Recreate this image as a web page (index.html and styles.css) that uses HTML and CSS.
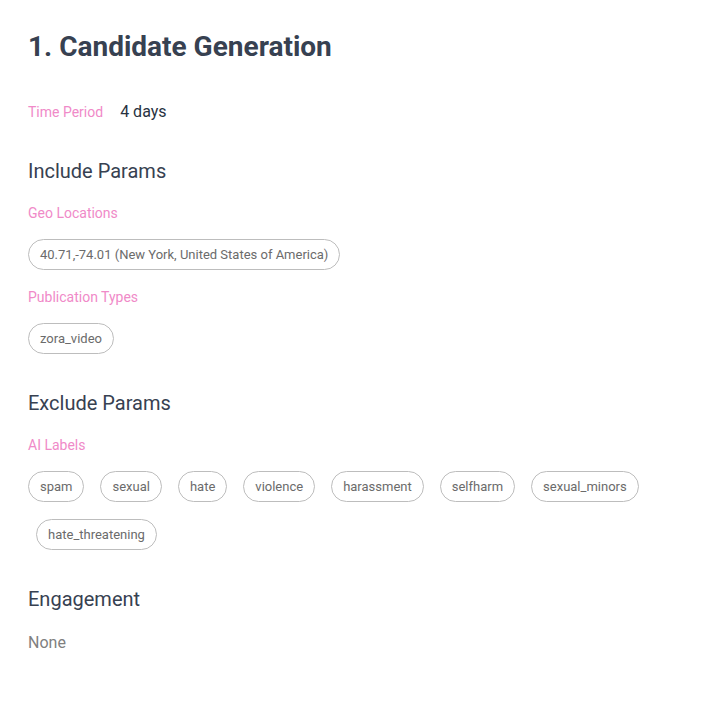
FILE: index.html
```html
<!DOCTYPE html>
<html>
<head>
<meta charset="utf-8">
<link rel="stylesheet" href="styles.css">
</head>
<body>
<div class="page">
  <h1 class="title">1. Candidate Generation</h1>
  <div class="period">
    <span class="label">Time Period</span>
    <span class="period-value">4 days</span>
  </div>

  <h2 class="section">Include Params</h2>
  <div class="label field-label">Geo Locations</div>
  <div class="chips">
    <span class="chip">40.71,-74.01 (New York, United States of America)</span>
  </div>
  <div class="label field-label">Publication Types</div>
  <div class="chips">
    <span class="chip">zora_video</span>
  </div>

  <h2 class="section">Exclude Params</h2>
  <div class="label field-label">AI Labels</div>
  <div class="chips">
    <span class="chip">spam</span>
    <span class="chip">sexual</span>
    <span class="chip">hate</span>
    <span class="chip">violence</span>
    <span class="chip">harassment</span>
    <span class="chip">selfharm</span>
    <span class="chip">sexual_minors</span>
    <span class="chip chip-indent">hate_threatening</span>
  </div>

  <h2 class="section">Engagement</h2>
  <div class="none">None</div>
</div>
</body>
</html>
```

FILE: styles.css
```css
html, body {
  margin: 0;
  padding: 0;
  background: #ffffff;
}
body {
  font-family: Roboto, "Liberation Sans", sans-serif;
  color: #374151;
}
.page {
  padding: 30px 28px;
}
.title {
  margin: 0;
  font-size: 28px;
  font-weight: 700;
  line-height: 34px;
  color: #374151;
}
.period {
  display: flex;
  align-items: baseline;
  gap: 17px;
  margin-top: 38px;
}
.label {
  font-size: 14px;
  color: #f08ac8;
  line-height: 20px;
}
.period-value {
  font-size: 16px;
  color: #283241;
}
.section {
  margin: 35px 0 0;
  font-size: 20px;
  font-weight: 400;
  line-height: 28px;
  color: #374151;
}
.field-label {
  margin-top: 18px;
}
.chips + .field-label {
  margin-top: 17px;
}
.chips {
  display: flex;
  flex-wrap: wrap;
  gap: 17px 16px;
  margin-top: 16px;
}
.chip {
  display: inline-flex;
  align-items: center;
  height: 29px;
  padding: 0 11px;
  border: 1px solid #bdbdbd;
  border-radius: 16px;
  font-size: 13px;
  color: #6b6b6b;
}
.chip-indent {
  margin-left: 8px;
}
.none {
  margin-top: 20px;
  font-size: 16px;
  color: #808080;
}
```
